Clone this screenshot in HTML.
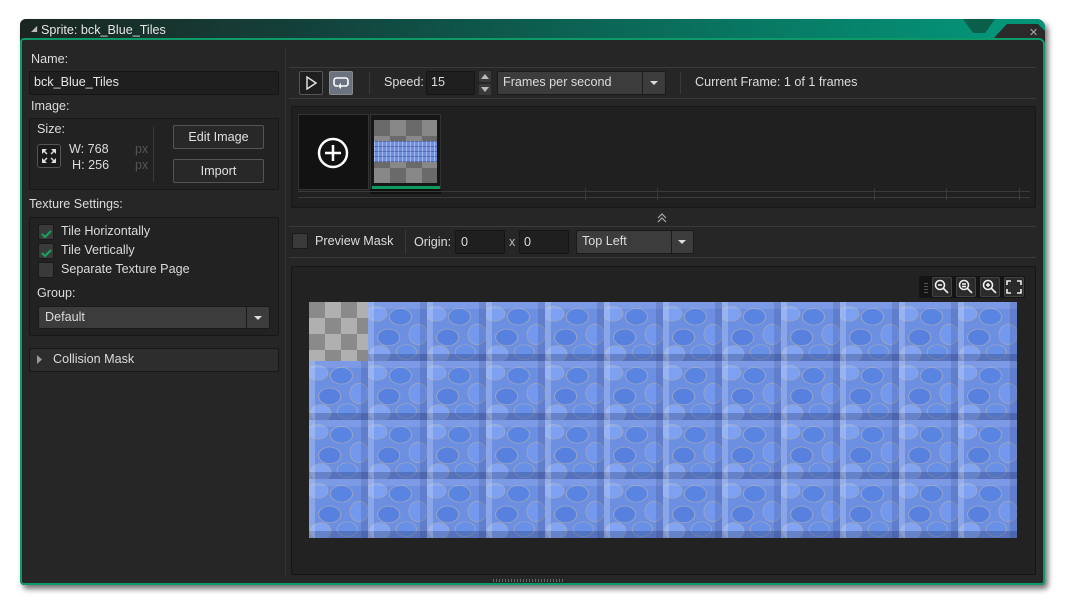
<!DOCTYPE html>
<html><head><meta charset="utf-8"><style>
*{margin:0;padding:0;box-sizing:border-box}
body{width:1065px;height:604px;background:#fff;position:relative;overflow:hidden;font-family:"Liberation Sans","DejaVu Sans",sans-serif;font-size:12.6px;color:#dcdcdc}
.a{position:absolute}
.win{left:20px;top:19px;width:1025px;height:566px;background:#1e1e1e;border-radius:6px 8px 4px 4px;box-shadow:3px 4px 6px rgba(0,0,0,.55)}
.title{left:20px;top:19px;width:1025px;height:20px;border-radius:6px 8px 0 0;background:linear-gradient(90deg,#1a2420 0%,#163a34 20%,#13403a 27%,#0a6a58 60%,#049478 95%,#049478 100%)}
.content{left:20px;top:38px;width:1025px;height:547px;background:#262626;border:2px solid #0e9a68;border-radius:4px 6px 4px 4px}
.lbl{color:#dcdcdc}
.box{background:#222;border:1px solid #171717;border-radius:2px}
.inp{background:#1f1f1f;border:1px solid #151515;border-radius:2px}
.btn{background:#282828;border:1px solid #555;border-radius:2px;text-align:center;color:#e0e0e0}
.dd{background:#3c3c3c;border:1px solid #1a1a1a;border-radius:2px}
.cb{width:16px;height:16px;background:#3a3a3a;border:1px solid #1a1a1a;border-radius:2px}
.sep{background:#3a3a3a}
.tiles{left:309px;top:302px;width:708px;height:236px;
background:
linear-gradient(90deg,rgba(255,255,255,.2) 0 6px,transparent 6px 52px,rgba(20,30,80,.15) 52px 59px),
linear-gradient(0deg,rgba(20,30,80,.25) 0 7px,transparent 7px 52px,rgba(255,255,255,.1) 52px 59px),
radial-gradient(ellipse 11px 8px at 15% 20%,#7da0f0 0 85%,#a0a8bc 92%,transparent 100%),
radial-gradient(ellipse 12px 9px at 55% 25%,#5a84e2 0 85%,#a0a8bc 92%,transparent 100%),
radial-gradient(ellipse 10px 11px at 85% 55%,#7498ee 0 85%,#a0a8bc 92%,transparent 100%),
radial-gradient(ellipse 12px 9px at 35% 60%,#5880de 0 85%,#a0a8bc 92%,transparent 100%),
radial-gradient(ellipse 11px 9px at 20% 88%,#82a4f2 0 85%,#a0a8bc 92%,transparent 100%),
radial-gradient(ellipse 11px 8px at 65% 85%,#6890e6 0 85%,#a0a8bc 92%,transparent 100%),
#6d8fe2;
background-size:59px 59px}
</style></head><body>
<div class="a win"></div>
<div class="a title"></div>
<svg class="a" style="left:950px;top:19px" width="95" height="20"><polygon points="13,0 45,0 35,14 23,14" fill="#0b5e4a"/><polygon points="43,20 57,5 88,5 95,12 95,20" fill="#2a2a2a"/><text x="79" y="17" fill="#aaa" font-size="11" font-family="Liberation Sans">✕</text></svg>
<div class="a" style="left:31px;top:24px;color:#bbb;font-size:8px">◢</div>
<div class="a" style="left:41px;top:23px;color:#e6e6e6">Sprite: bck_Blue_Tiles</div>
<div class="a content"></div>

<div class="a lbl" style="left:31px;top:52px">Name:</div>
<div class="a inp" style="left:29px;top:71px;width:250px;height:24px"></div>
<div class="a" style="left:34px;top:75px;color:#e6e6e6">bck_Blue_Tiles</div>
<div class="a lbl" style="left:31px;top:99px">Image:</div>
<div class="a box" style="left:29px;top:118px;width:250px;height:72px"></div>
<div class="a lbl" style="left:37px;top:122px">Size:</div>
<div class="a" style="left:37px;top:144px;width:24px;height:24px;border:1px solid #555;border-radius:3px;background:#1a1a1a"></div>
<svg class="a" style="left:42px;top:149px" width="14" height="14"><g fill="#ddd"><polygon points="0,0 5,0 0,5"/><polygon points="14,0 9,0 14,5"/><polygon points="0,14 5,14 0,9"/><polygon points="14,14 9,14 14,9"/></g><g stroke="#ddd" stroke-width="1.5"><line x1="1" y1="1" x2="5" y2="5"/><line x1="13" y1="1" x2="9" y2="5"/><line x1="1" y1="13" x2="5" y2="9"/><line x1="13" y1="13" x2="9" y2="9"/></g></svg>
<div class="a" style="left:69px;top:142px">W: 768</div>
<div class="a" style="left:72px;top:158px">H: 256</div>
<div class="a" style="left:135px;top:142px;color:#555">px</div>
<div class="a" style="left:135px;top:158px;color:#555">px</div>
<div class="a sep" style="left:153px;top:127px;width:1px;height:55px"></div>
<div class="a btn" style="left:173px;top:125px;width:91px;height:24px;line-height:22px">Edit Image</div>
<div class="a btn" style="left:173px;top:159px;width:91px;height:24px;line-height:22px">Import</div>
<div class="a lbl" style="left:29px;top:197px">Texture Settings:</div>
<div class="a box" style="left:29px;top:217px;width:250px;height:119px"></div>
<div class="a cb" style="left:38px;top:224px"></div>
<div class="a cb" style="left:38px;top:243px"></div>
<div class="a cb" style="left:38px;top:262px"></div>
<svg class="a" style="left:40px;top:228px" width="14" height="30"><path d="M2,6 L5,9 L11,3" stroke="#15a060" stroke-width="2.2" fill="none"/><path d="M2,25 L5,28 L11,22" stroke="#15a060" stroke-width="2.2" fill="none"/></svg>
<div class="a" style="left:61px;top:224px">Tile Horizontally</div>
<div class="a" style="left:61px;top:243px">Tile Vertically</div>
<div class="a" style="left:61px;top:262px">Separate Texture Page</div>
<div class="a lbl" style="left:37px;top:286px">Group:</div>
<div class="a dd" style="left:38px;top:306px;width:232px;height:23px"></div>
<div class="a sep" style="left:246px;top:307px;width:1px;height:21px;background:#1a1a1a"></div>
<div class="a" style="left:45px;top:310px">Default</div>
<svg class="a" style="left:253px;top:315px" width="10" height="6"><polygon points="1,1 9,1 5,5" fill="#ddd"/></svg>
<div class="a" style="left:29px;top:348px;width:250px;height:24px;background:#2d2d2d;border:1px solid #171717;border-radius:2px"></div>
<svg class="a" style="left:37px;top:355px" width="6" height="9"><polygon points="0,0 5,4.5 0,9" fill="#999"/></svg>
<div class="a" style="left:53px;top:352px">Collision Mask</div>

<div class="a" style="left:285px;top:48px;width:1px;height:528px;background:#333"></div>

<div class="a sep" style="left:289px;top:67px;width:747px;height:1px"></div>
<div class="a" style="left:299px;top:71px;width:24px;height:24px;border:1px solid #555;border-radius:2px;background:#1e1e1e"></div>
<svg class="a" style="left:305px;top:76px" width="12" height="14"><polygon points="2,1 11,7 2,13" stroke="#ddd" stroke-width="1.5" fill="none"/></svg>
<div class="a" style="left:329px;top:71px;width:24px;height:24px;border:1px solid #888;border-radius:2px;background:#6b7280"></div>
<svg class="a" style="left:333px;top:76px" width="16" height="14"><path d="M5,10 H3.5 A2.5,2.5 0 0 1 1,7.5 V4.5 A2.5,2.5 0 0 1 3.5,2 H12.5 A2.5,2.5 0 0 1 15,4.5 V7.5 A2.5,2.5 0 0 1 12.5,10 H8" stroke="#fff" stroke-width="1.6" fill="none"/><polygon points="8,7 8,13 5,10" fill="#fff"/></svg>
<div class="a sep" style="left:369px;top:72px;width:1px;height:22px"></div>
<div class="a" style="left:384px;top:75px">Speed:</div>
<div class="a inp" style="left:426px;top:71px;width:49px;height:24px"></div>
<div class="a" style="left:431px;top:75px">15</div>
<div class="a" style="left:479px;top:71px;width:12px;height:11px;background:#3a3a3a;border-radius:2px"></div>
<div class="a" style="left:479px;top:84px;width:12px;height:11px;background:#3a3a3a;border-radius:2px"></div>
<svg class="a" style="left:480px;top:72px" width="10" height="22"><polygon points="1,7 9,7 5,2" fill="#bbb"/><polygon points="1,15 9,15 5,20" fill="#bbb"/></svg>
<div class="a dd" style="left:497px;top:71px;width:169px;height:24px"></div>
<div class="a" style="left:642px;top:72px;width:1px;height:22px;background:#1a1a1a"></div>
<div class="a" style="left:503px;top:75px">Frames per second</div>
<svg class="a" style="left:649px;top:80px" width="10" height="6"><polygon points="1,1 9,1 5,5" fill="#ddd"/></svg>
<div class="a sep" style="left:680px;top:72px;width:1px;height:22px"></div>
<div class="a" style="left:695px;top:75px">Current Frame: 1 of 1 frames</div>
<div class="a sep" style="left:289px;top:98px;width:747px;height:1px"></div>

<div class="a" style="left:291px;top:106px;width:745px;height:102px;background:#202020;border:1px solid #181818;border-radius:2px"></div>
<div class="a" style="left:298px;top:114px;width:71px;height:76px;background:#121212;border:1px solid #333"></div>
<svg class="a" style="left:316px;top:136px" width="34" height="34"><circle cx="17" cy="17" r="14" stroke="#fff" stroke-width="2.5" fill="none"/><path d="M17,9 V25 M9,17 H25" stroke="#fff" stroke-width="2.5"/></svg>
<div class="a" style="left:370px;top:114px;width:71px;height:76px;background:#161616;border:1px solid #333"></div>
<div class="a" style="left:374px;top:120px;width:63px;height:63px;background:repeating-conic-gradient(#888 0 25%,#6a6a6a 0 50%) 0 0/32px 32px"></div>
<div class="a" style="left:374px;top:141px;width:63px;height:21px;background:#6f8fe0;background-image:repeating-linear-gradient(90deg,rgba(255,255,255,.35) 0 1px,transparent 1px 4px),repeating-linear-gradient(0deg,rgba(20,30,90,.35) 0 1px,transparent 1px 5px)"></div>
<div class="a" style="left:372px;top:186px;width:68px;height:3px;background:#0e9a5e"></div>
<div class="a" style="left:370px;top:189px;width:71px;height:5px;background:#111"></div>
<div class="a" style="left:298px;top:191px;width:732px;height:1px;background:#3a3a3a"></div>
<div class="a" style="left:298px;top:197px;width:732px;height:1px;background:#3a3a3a"></div>
<div class="a" style="left:657px;top:188px;width:1px;height:12px;background:#3a3a3a"></div>
<div class="a" style="left:585px;top:188px;width:1px;height:12px;background:#3a3a3a"></div>
<div class="a" style="left:874px;top:188px;width:1px;height:12px;background:#3a3a3a"></div>
<div class="a" style="left:946px;top:188px;width:1px;height:12px;background:#3a3a3a"></div>
<div class="a" style="left:1019px;top:188px;width:1px;height:12px;background:#3a3a3a"></div>
<svg class="a" style="left:657px;top:213px" width="10" height="10"><path d="M1,5 L5,1 L9,5 M1,9 L5,5 L9,9" stroke="#aaa" stroke-width="1.2" fill="none"/></svg>
<div class="a sep" style="left:289px;top:226px;width:747px;height:1px"></div>

<div class="a cb" style="left:292px;top:233px"></div>
<div class="a" style="left:315px;top:234px">Preview Mask</div>
<div class="a sep" style="left:405px;top:230px;width:1px;height:24px"></div>
<div class="a" style="left:414px;top:235px">Origin:</div>
<div class="a inp" style="left:455px;top:230px;width:50px;height:24px"></div>
<div class="a" style="left:461px;top:235px">0</div>
<div class="a" style="left:509px;top:235px;color:#bbb">x</div>
<div class="a inp" style="left:519px;top:230px;width:50px;height:24px"></div>
<div class="a" style="left:524px;top:235px">0</div>
<div class="a dd" style="left:576px;top:230px;width:118px;height:24px"></div>
<div class="a" style="left:671px;top:231px;width:1px;height:22px;background:#1a1a1a"></div>
<div class="a" style="left:582px;top:234px">Top Left</div>
<svg class="a" style="left:677px;top:239px" width="10" height="6"><polygon points="1,1 9,1 5,5" fill="#ddd"/></svg>
<div class="a sep" style="left:289px;top:257px;width:747px;height:1px"></div>

<div class="a" style="left:291px;top:266px;width:745px;height:309px;background:#222;border:1px solid #151515;border-radius:2px"></div>
<div class="a" style="left:919px;top:276px;width:106px;height:22px;background:#141414;border-radius:2px"></div>
<div class="a" style="left:924px;top:281px;width:4px;height:12px;background:repeating-linear-gradient(0deg,#555 0 1px,transparent 1px 3px)"></div>
<div class="a" style="left:932px;top:277px;width:20px;height:20px;border:1px solid #444;border-radius:2px;background:#2a2a2a"></div>
<div class="a" style="left:956px;top:277px;width:20px;height:20px;border:1px solid #444;border-radius:2px;background:#2a2a2a"></div>
<div class="a" style="left:980px;top:277px;width:20px;height:20px;border:1px solid #444;border-radius:2px;background:#2a2a2a"></div>
<div class="a" style="left:1004px;top:277px;width:20px;height:20px;border:1px solid #444;border-radius:2px;background:#2a2a2a"></div>
<svg class="a" style="left:932px;top:277px" width="92" height="20" fill="none" stroke="#eee" stroke-width="1.6">
<circle cx="8" cy="8" r="4.5"/><line x1="11" y1="11" x2="16" y2="16"/><line x1="6" y1="8" x2="10" y2="8"/>
<circle cx="32" cy="8" r="4.5"/><line x1="35" y1="11" x2="40" y2="16"/><line x1="30" y1="7" x2="34" y2="7"/><line x1="30" y1="9.5" x2="34" y2="9.5"/>
<circle cx="56" cy="8" r="4.5"/><line x1="59" y1="11" x2="64" y2="16"/><line x1="54" y1="8" x2="58" y2="8"/><line x1="56" y1="6" x2="56" y2="10"/>
<path d="M75,8 V4 H79 M85,4 H89 V8 M89,12 V16 H85 M79,16 H75 V12"/></svg>
<div class="a tiles"></div>
<div class="a" style="left:309px;top:302px;width:59px;height:59px;background:repeating-conic-gradient(#b0b0b0 0 25%,#8a8a8a 0 50%) 0 0/32px 32px"></div>
<div class="a" style="left:493px;top:579px;width:70px;height:3px;background:repeating-linear-gradient(90deg,#666 0 1px,transparent 1px 3px)"></div>
</body></html>
